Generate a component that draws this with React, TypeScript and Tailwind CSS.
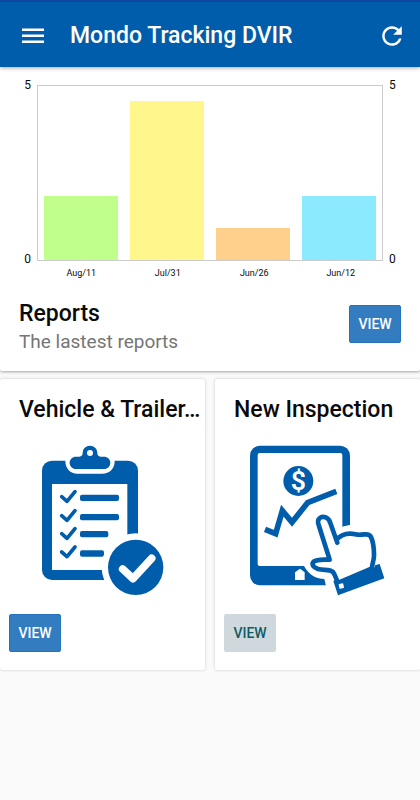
import React from 'react';

interface Report {
  label: string;
  value: number;
  color: string;
}

interface ViewButtonProps {
  label: string;
  muted?: boolean;
}

interface ActionCardProps {
  title: string;
  muted?: boolean;
  children: React.ReactNode;
}

const reports: Report[] = [
  { label: 'Aug/11', value: 2, color: 'bg-[#c0ff8c]' },
  { label: 'Jul/31', value: 5, color: 'bg-[#fff78c]' },
  { label: 'Jun/26', value: 1, color: 'bg-[#ffd08c]' },
  { label: 'Jun/12', value: 2, color: 'bg-[#8ceaff]' },
];

// the axis leaves some headroom above the largest value
const AXIS_MAX = 5.46;

const ViewButton: React.FC<ViewButtonProps> = ({ label, muted }) => (
  <button
    type="button"
    aria-label={label}
    className={`h-[38px] w-[52px] shrink-0 rounded-xs text-sm font-medium ${
      muted ? 'bg-[#cfd8dc] text-[#0f5c66]' : 'border border-[#2673bd] bg-[#337cc0] text-white'
    }`}
  >
    VIEW
  </button>
);

const AxisLabels: React.FC<{ side: string }> = ({ side }) => (
  <div className={`flex w-[37px] shrink-0 flex-col justify-between text-xs leading-3 ${side}`}>
    <span className="-mt-1.5">5</span>
    <span className="-mb-1">0</span>
  </div>
);

const ReportsChart: React.FC = () => (
  <div>
    <div className="flex h-44">
      <AxisLabels side="pr-1.5 text-right" />
      <div className="grid flex-1 grid-cols-4 items-end border border-[#cccccc]">
        {reports.map((r) => (
          <div
            key={r.label}
            className={`mx-auto w-[85%] ${r.color}`}
            style={{ height: `${(r.value / AXIS_MAX) * 100}%` }}
          />
        ))}
      </div>
      <AxisLabels side="pl-1.5" />
    </div>
    <div className="mr-9 ml-[38px] mt-1.5 grid grid-cols-4 text-center text-[9px] leading-3">
      {reports.map((r) => (
        <span key={r.label}>{r.label}</span>
      ))}
    </div>
  </div>
);

const ChecklistIcon: React.FC = () => (
  <svg viewBox="33 27 372 456" className="h-[152px] w-[124px]" fill="none" aria-hidden="true">
    <rect x="36" y="77" width="288" height="358" rx="30" fill="#005dab" />
    <rect x="66" y="147" width="226" height="258" fill="#fff" />
    {/* clip */}
    <path d="M106 70V78C106 101 121 116 142 116H216C239 116 254 101 254 78V70Z" fill="#fff" />
    <path
      fillRule="evenodd"
      d="M138 65H148C155 65 158 60 158 54C158 41 168 32 180 32C192 32 202 41 202 54C202 60 205 65 212 65H222C233 65 241 73 241 83C241 94 233 102 222 102H138C127 102 119 94 119 83C119 73 127 65 138 65ZM180 45A9 9 0 1 0 180 63A9 9 0 1 0 180 45Z"
      fill="#005dab"
    />
    <g stroke="#005dab" strokeWidth="11" strokeLinecap="round" strokeLinejoin="round">
      <path d="M95 185L111 199L135 170" />
      <path d="M95 242L111 256L135 227" />
      <path d="M95 296L111 310L135 281" />
      <path d="M95 351L111 365L135 336" />
    </g>
    <g fill="#005dab">
      <rect x="150" y="179" width="117" height="19" rx="6" />
      <rect x="150" y="237" width="117" height="19" rx="6" />
      <rect x="150" y="288" width="85" height="19" rx="6" />
      <rect x="150" y="346" width="72" height="19" rx="6" />
    </g>
    <circle cx="317" cy="397" r="102" fill="#fff" />
    <circle cx="317" cy="397" r="83" fill="#005dab" />
    <path d="M278 402L309 431L365 370" stroke="#fff" strokeWidth="23" strokeLinecap="round" strokeLinejoin="round" />
  </svg>
);

const TabletIcon: React.FC = () => (
  <svg viewBox="45 27 408 456" className="h-[152px] w-[136px]" fill="none" aria-hidden="true">
    <rect x="45" y="32" width="300" height="419" rx="30" fill="#005dab" />
    <rect x="68" y="54" width="254" height="339" rx="6" fill="#fff" />
    <path d="M180 435V412L195 401L209 412V435Z" fill="#fff" />
    <circle cx="190" cy="138" r="45" fill="#005dab" />
    <text
      x="190"
      y="166"
      textAnchor="middle"
      fill="#fff"
      fontSize="80"
      fontWeight="600"
      fontFamily="Roboto, sans-serif"
    >
      $
    </text>
    <path d="M90 283L122 296L142 227L171 262L218 203L304 169" stroke="#005dab" strokeWidth="17" />
    {/* hand: white halo first, then the outline */}
    <path
      d="M318 276L346 269L430 290L450 460L310 483H280L268 432C246 431 224 424 207 393L215 370L262 357L300 290Z"
      fill="#fff"
    />
    <path
      d="M307 323L286 264C281 247 265 242 256 248C247 254 248 264 252 273L284 374C268 374 247 371 236 380C228 389 236 397 249 402C266 407 284 401 294 411C301 420 303 432 309 444L411 400C410 388 418 376 417 360C417 340 415 321 408 306C402 293 389 299 378 299C366 301 359 296 348 296C334 295 316 302 304 314"
      fill="#fff"
      stroke="#005dab"
      strokeWidth="14"
      strokeLinecap="round"
      strokeLinejoin="round"
    />
    <path d="M295 438L300 436L303 442L420 396V391L434 387L448 430L309 481Z" fill="#005dab" />
    <rect x="312" y="446" width="14" height="14" rx="2" fill="#fff" transform="rotate(-12 319 453)" />
  </svg>
);

const ActionCard: React.FC<ActionCardProps> = ({ title, muted, children }) => (
  <section className="min-w-0 rounded-xs bg-white pt-4 pb-[18px] shadow-[0_0_3px_rgba(0,0,0,0.22)]">
    <h2 className="truncate pl-[19px] text-[23px] leading-[30px] font-medium">{title}</h2>
    <div className="mt-[19px] mb-[18px] flex justify-center">{children}</div>
    <div className="px-[9px]">
      <ViewButton label={`View ${title}`} muted={muted} />
    </div>
  </section>
);

const App: React.FC = () => {
  return (
    <div className="min-h-screen bg-[#fafafa] font-[Roboto,sans-serif] text-[#0a0a0a]">
      <header className="relative flex h-[67px] items-center border-t-2 border-[#0d47a1] bg-[#005dab] pt-0.5 pr-[17px] pl-[22px] text-white shadow-[0_1px_4px_rgba(0,0,0,0.35)]">
        <button type="button" aria-label="Open menu">
          <svg viewBox="0 0 22 16" className="h-4 w-[22px]" fill="currentColor">
            <path d="M0 0.5H22V3H0ZM0 6.5H22V9H0ZM0 12.5H22V15H0Z" />
          </svg>
        </button>
        <h1 className="ml-[26px] flex-1 truncate text-[23px] leading-[30px] font-medium">Mondo Tracking DVIR</h1>
        <button type="button" aria-label="Refresh">
          <svg viewBox="3 3 18 18" className="size-[22px]" fill="currentColor">
            <path d="M17.65 6.35C16.2 4.9 14.21 4 12 4c-4.42 0-7.99 3.58-7.99 8s3.57 8 7.99 8c3.73 0 6.84-2.55 7.73-6h-2.08c-.82 2.33-3.04 4-5.65 4-3.31 0-6-2.69-6-6s2.69-6 6-6c1.66 0 3.14.69 4.22 1.78L13 11h7V4l-2.35 2.35z" />
          </svg>
        </button>
      </header>

      <main>
        <section className="rounded-b-xs bg-white pt-[18px] pb-4 shadow-[0_1px_3px_rgba(0,0,0,0.35)]">
          <ReportsChart />
          <div className="mt-5 flex items-center justify-between px-[19px]">
            <div>
              <h2 className="text-[23px] leading-[30px] font-medium">Reports</h2>
              <p className="text-[19px] leading-[26px] text-[#757575]">The lastest reports</p>
            </div>
            <div className="pb-1.5">
              <ViewButton label="View reports" />
            </div>
          </div>
        </section>

        <div className="mt-2 grid grid-cols-2 gap-2.5">
          <ActionCard title="Vehicle &amp; Trailer…">
            <ChecklistIcon />
          </ActionCard>
          <ActionCard title="New Inspection" muted>
            <TabletIcon />
          </ActionCard>
        </div>
      </main>
    </div>
  );
};

export default App;
